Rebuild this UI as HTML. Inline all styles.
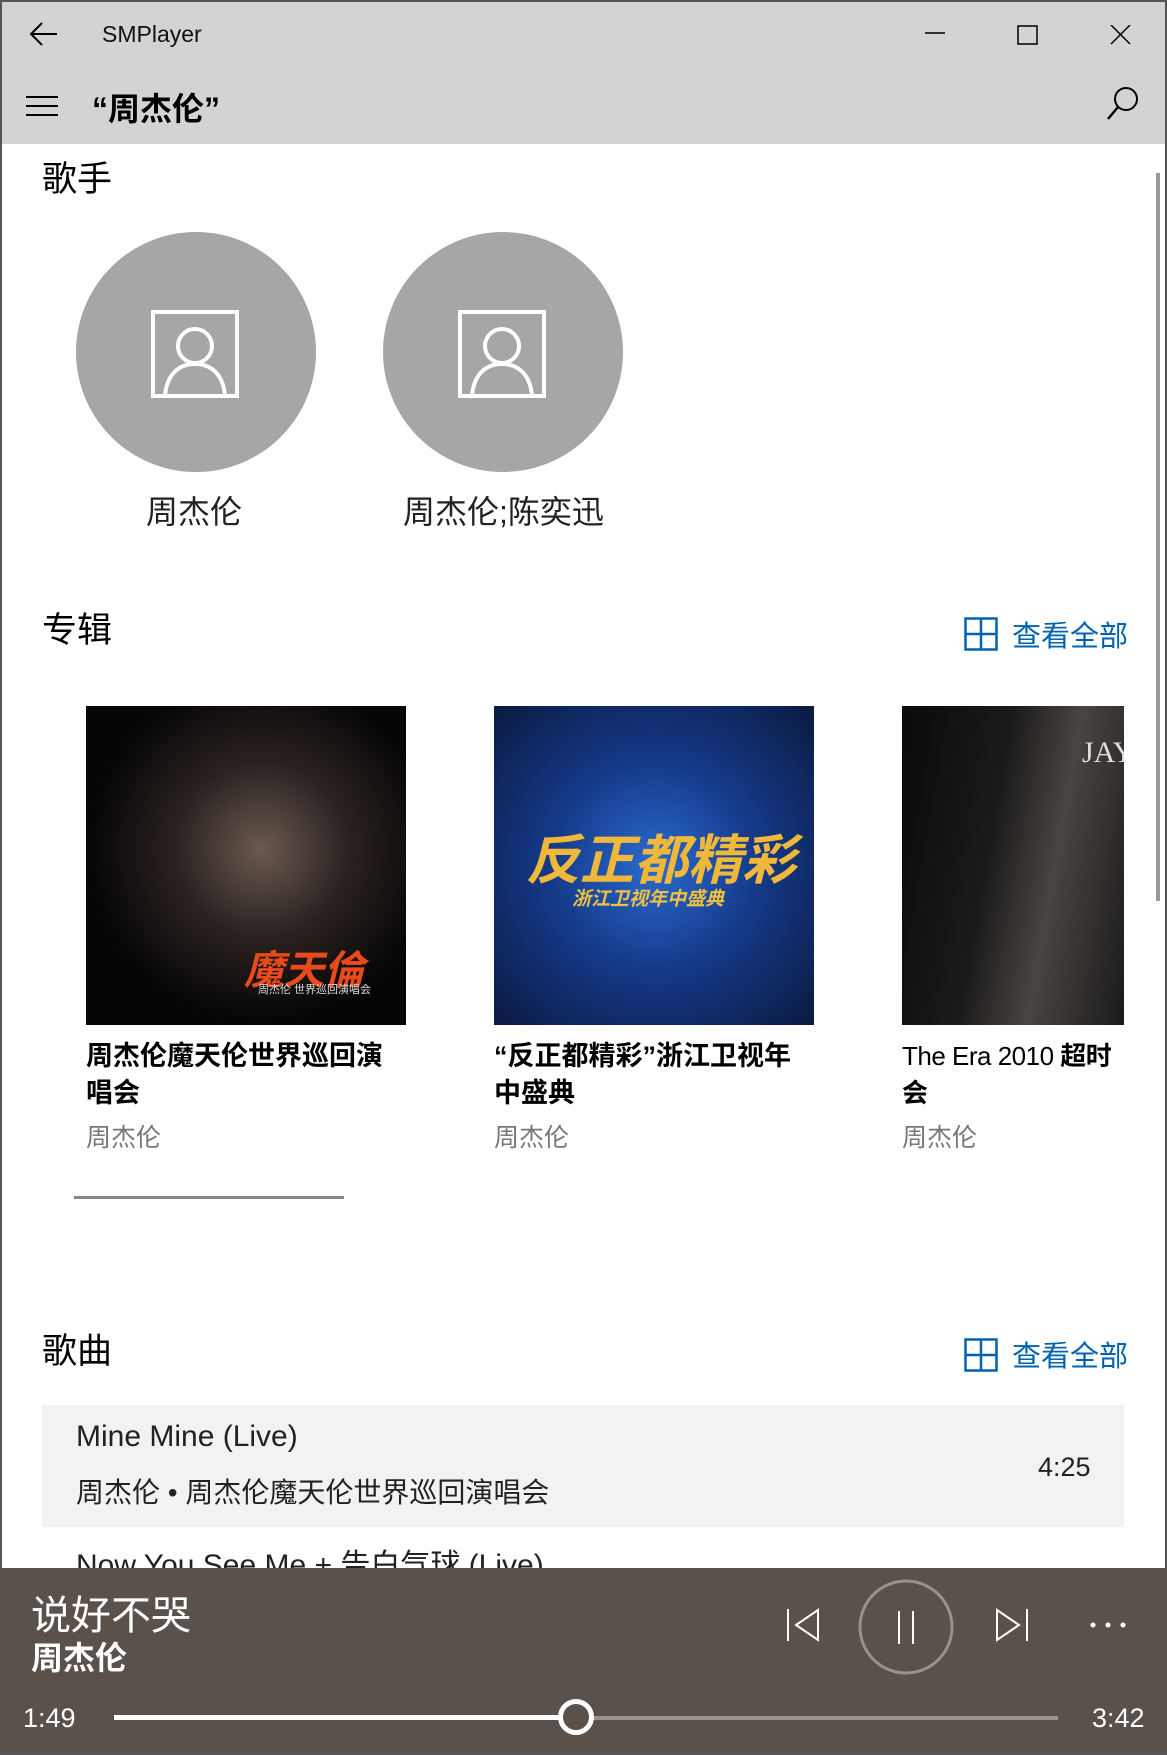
<!DOCTYPE html>
<html><head><meta charset="utf-8"><style>
*{margin:0;padding:0;box-sizing:border-box}
body{width:1167px;height:1755px;overflow:hidden;background:#fff;font-family:"Liberation Sans","Noto Sans CJK SC",sans-serif;position:relative;color:#000}
.a{position:absolute;white-space:nowrap}
#win{position:absolute;left:0;top:0;width:1167px;height:1755px;border:2px solid #555;border-top:2px solid #555}
.hdr{position:absolute;left:0;top:0;width:1167px;height:144px;background:#d3d3d3}
.circ{position:absolute;width:240px;height:240px;border-radius:50%;background:#a6a6a6}
.h2{font-size:35px;line-height:40px}
.blue{color:#0063b1;font-size:29px;line-height:34px}
.t{font-size:27px;font-weight:bold;line-height:37px;white-space:normal}
.g{color:#777;font-size:25px}
.bar{position:absolute;left:0;top:1568px;width:1167px;height:187px;background:#5a514b}
</style></head><body>
<div class="hdr"></div>
<svg class="a" style="left:28px;top:20px" width="32" height="28" viewBox="0 0 32 28"><path d="M14 3 L3 14 L14 25 M3 14 H29" stroke="#000" stroke-width="2" fill="none"/></svg>
<div class="a" style="left:102px;top:21px;font-size:23px;color:#111">SMPlayer</div>
<svg class="a" style="left:925px;top:25px" width="220" height="24"><path d="M0 8 H20" stroke="#000" stroke-width="1.5"/><rect x="93" y="1" width="19" height="18" fill="none" stroke="#000" stroke-width="1.5"/><path d="M186 0 L205 19 M205 0 L186 19" stroke="#000" stroke-width="1.5"/></svg>
<svg class="a" style="left:26px;top:95px" width="34" height="22"><path d="M0 2H32M0 11H32M0 20H32" stroke="#000" stroke-width="2"/></svg>
<div class="a" style="left:92px;top:84px;font-size:32px;font-weight:bold">“周杰伦”</div>
<svg class="a" style="left:1106px;top:86px" width="34" height="36"><circle cx="20" cy="13" r="11" fill="none" stroke="#000" stroke-width="2"/><path d="M12 21 L2 33" stroke="#000" stroke-width="2.5"/></svg>
<div class="a" style="left:1156px;top:173px;width:4px;height:728px;background:#999"></div>

<div class="a h2" style="left:42px;top:160px">歌手</div>
<div class="circ" style="left:76px;top:232px"></div>
<div class="circ" style="left:383px;top:232px"></div>
<svg class="a" style="left:151px;top:310px" width="90" height="88"><rect x="2" y="2" width="84" height="84" fill="none" stroke="#fff" stroke-width="4"/><circle cx="44" cy="36" r="17" fill="none" stroke="#fff" stroke-width="4"/><path d="M14 86 C16 62 30 54 44 54 C58 54 72 62 74 86" fill="none" stroke="#fff" stroke-width="4"/></svg>
<svg class="a" style="left:458px;top:310px" width="90" height="88"><rect x="2" y="2" width="84" height="84" fill="none" stroke="#fff" stroke-width="4"/><circle cx="44" cy="36" r="17" fill="none" stroke="#fff" stroke-width="4"/><path d="M14 86 C16 62 30 54 44 54 C58 54 72 62 74 86" fill="none" stroke="#fff" stroke-width="4"/></svg>
<div class="a" style="left:146px;top:487px;font-size:32px;color:#222">周杰伦</div>
<div class="a" style="left:403px;top:487px;font-size:32px;color:#222">周杰伦;陈奕迅</div>

<div class="a h2" style="left:42px;top:611px">专辑</div>
<svg class="a" style="left:964px;top:617px" width="34" height="34"><rect x="1.5" y="1.5" width="31" height="31" fill="none" stroke="#0063b1" stroke-width="2.5"/><path d="M17 1.5V32.5M1.5 17H32.5" stroke="#0063b1" stroke-width="2.5"/></svg>
<div class="a blue" style="left:1012px;top:620px">查看全部</div>

<div class="a" style="left:86px;top:706px;width:320px;height:319px;background:radial-gradient(ellipse at 55% 45%,#6a5a50 0%,#2a2220 35%,#050505 70%)"><div class="a" style="left:158px;top:232px;color:#e84a1c;font-size:40px;font-weight:bold;font-style:italic">魔天倫</div><div class="a" style="left:172px;top:275px;color:#ddd;font-size:11px">周杰伦 世界巡回演唱会</div></div>
<div class="a" style="left:494px;top:706px;width:320px;height:319px;background:radial-gradient(ellipse at 50% 50%,#2a6bd0 0%,#153a8a 45%,#0a1a40 100%)"><div class="a" style="left:32px;top:110px;color:#f0b83a;font-size:54px;font-weight:bold;font-style:italic">反正都精彩</div><div class="a" style="left:78px;top:178px;color:#f0c040;font-size:19px;font-weight:bold;font-style:italic">浙江卫视年中盛典</div></div>
<div class="a" style="left:902px;top:706px;width:222px;height:319px;overflow:hidden;background:linear-gradient(100deg,#0a0a0a 0%,#1a1a1a 40%,#4a4440 65%,#1a1a1a 100%)"><div class="a" style="left:180px;top:30px;color:#ddd;font-size:30px;font-family:'Liberation Serif',serif">JAY</div></div>

<div class="a t" style="left:86px;top:1038px;width:320px">周杰伦魔天伦世界巡回演唱会</div>
<div class="a g" style="left:86px;top:1118px">周杰伦</div>
<div class="a t" style="left:494px;top:1038px;width:320px">“反正都精彩”浙江卫视年中盛典</div>
<div class="a g" style="left:494px;top:1118px">周杰伦</div>
<div class="a t" style="left:902px;top:1038px;width:226px;font-size:26px;letter-spacing:-0.5px"><span style="font-weight:normal">The Era 2010 </span>超时会</div>
<div class="a g" style="left:902px;top:1118px">周杰伦</div>
<div class="a" style="left:74px;top:1196px;width:270px;height:3px;background:#888"></div>

<div class="a h2" style="left:42px;top:1332px">歌曲</div>
<svg class="a" style="left:964px;top:1338px" width="34" height="34"><rect x="1.5" y="1.5" width="31" height="31" fill="none" stroke="#0063b1" stroke-width="2.5"/><path d="M17 1.5V32.5M1.5 17H32.5" stroke="#0063b1" stroke-width="2.5"/></svg>
<div class="a blue" style="left:1012px;top:1340px">查看全部</div>
<div class="a" style="left:42px;top:1405px;width:1082px;height:122px;background:#f2f2f2"></div>
<div class="a" style="left:76px;top:1420px;font-size:30px;color:#222">Mine Mine (Live)</div>
<div class="a" style="left:76px;top:1471px;font-size:28px;color:#222">周杰伦 • 周杰伦魔天伦世界巡回演唱会</div>
<div class="a" style="left:1038px;top:1452px;font-size:27px;color:#222">4:25</div>
<div class="a" style="left:76px;top:1540px;font-size:30px;color:#222">Now You See Me + 告白气球 (Live)</div>

<div class="bar"></div>
<div class="a" style="left:31px;top:1583px;font-size:40px;color:#fff">说好不哭</div>
<div class="a" style="left:31px;top:1633px;font-size:32px;font-weight:bold;color:#fff">周杰伦</div>
<svg class="a" style="left:786px;top:1608px" width="36" height="34"><path d="M2 1V33M32 2L10 17L32 32Z" stroke="#fff" stroke-width="2" fill="none"/></svg>
<svg class="a" style="left:857px;top:1578px" width="98" height="98"><circle cx="49" cy="49" r="46" fill="none" stroke="#9a918b" stroke-width="3"/><path d="M42 33V66M56 33V66" stroke="#fff" stroke-width="2"/></svg>
<svg class="a" style="left:993px;top:1608px" width="36" height="34"><path d="M34 1V33M4 2L26 17L4 32Z" stroke="#fff" stroke-width="2" fill="none"/></svg>
<svg class="a" style="left:1088px;top:1620px" width="40" height="10"><circle cx="5" cy="5" r="2.5" fill="#fff"/><circle cx="20" cy="5" r="2.5" fill="#fff"/><circle cx="35" cy="5" r="2.5" fill="#fff"/></svg>
<div class="a" style="left:23px;top:1703px;font-size:27px;color:#fff">1:49</div>
<div class="a" style="left:114px;top:1716px;width:944px;height:4px;background:#9a918b"></div>
<div class="a" style="left:114px;top:1715px;width:462px;height:5px;background:#fff"></div>
<div class="a" style="left:558px;top:1699px;width:36px;height:36px;border-radius:50%;border:5px solid #fff;background:#5a514b"></div>
<div class="a" style="left:1092px;top:1703px;font-size:27px;color:#fff">3:42</div>
<div id="win"></div>
</body></html>
